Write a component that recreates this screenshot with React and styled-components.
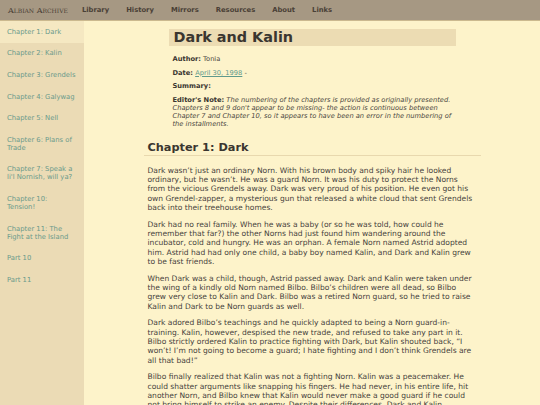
import React from 'react';
import styled, { createGlobalStyle } from 'styled-components';

const GlobalStyle = createGlobalStyle`
  html, body {
    margin: 0;
    padding: 0;
    background: #fdf3ca;
  }
  body {
    font-family: "DejaVu Sans", Verdana, sans-serif;
    color: #3d3a35;
  }
`;

const chapters = [
  'Chapter 1: Dark',
  'Chapter 2: Kalin',
  'Chapter 3: Grendels',
  'Chapter 4: Galywag',
  'Chapter 5: Nell',
  'Chapter 6: Plans of Trade',
  "Chapter 7: Speak a li'l Nornish, will ya?",
  'Chapter 10: Tension!',
  'Chapter 11: The Fight at the Island',
  'Part 10',
  'Part 11',
];

const navItems = ['Library', 'History', 'Mirrors', 'Resources', 'About', 'Links'];

const paragraphs = [
  "Dark wasn’t just an ordinary Norn. With his brown body and spiky hair he looked ordinary, but he wasn’t. He was a guard Norn. It was his duty to protect the Norns from the vicious Grendels away. Dark was very proud of his position. He even got his own Grendel-zapper, a mysterious gun that released a white cloud that sent Grendels back into their treehouse homes.",
  "Dark had no real family. When he was a baby (or so he was told, how could he remember that far?) the other Norns had just found him wandering around the incubator, cold and hungry. He was an orphan. A female Norn named Astrid adopted him. Astrid had had only one child, a baby boy named Kalin, and Dark and Kalin grew to be fast friends.",
  "When Dark was a child, though, Astrid passed away. Dark and Kalin were taken under the wing of a kindly old Norn named Bilbo. Bilbo’s children were all dead, so Bilbo grew very close to Kalin and Dark. Bilbo was a retired Norn guard, so he tried to raise Kalin and Dark to be Norn guards as well.",
  "Dark adored Bilbo’s teachings and he quickly adapted to being a Norn guard-in-training. Kalin, however, despised the new trade, and refused to take any part in it. Bilbo strictly ordered Kalin to practice fighting with Dark, but Kalin shouted back, “I won’t! I’m not going to become a guard; I hate fighting and I don’t think Grendels are all that bad!”",
  "Bilbo finally realized that Kalin was not a fighting Norn. Kalin was a peacemaker. He could shatter arguments like snapping his fingers. He had never, in his entire life, hit another Norn, and Bilbo knew that Kalin would never make a good guard if he could not bring himself to strike an enemy. Despite their differences, Dark and Kalin remained the best of friends.",
];

const Page = styled.div`
  min-height: 100vh;
  display: flex;
  flex-direction: column;
`;

const NavBar = styled.nav`
  height: 20px;
  display: flex;
  align-items: center;
  background: #a69883;
  border-bottom: 1px solid #cbb98f;
  padding-left: 8px;
`;

const SiteTitle = styled.span`
  font-family: "DejaVu Serif", "Liberation Serif", serif;
  font-variant: small-caps;
  font-size: 8px;
  color: #4a4036;
  margin-right: 14px;
`;

const NavLink = styled.a`
  font-size: 6.8px;
  font-weight: bold;
  color: #4a4036;
  text-decoration: none;
  margin-right: 17px;
`;

const Body = styled.div`
  flex: 1;
  display: flex;
`;

const Sidebar = styled.aside`
  width: 84px;
  flex-shrink: 0;
  background: #ebdbb5;
`;

const SideItem = styled.a`
  display: block;
  padding: 6.8px 7px;
  font-size: 6.8px;
  line-height: 8px;
  color: #6a9a8b;
  text-decoration: none;
  background: ${(p) => (p.$active ? '#f5e8c2' : 'transparent')};
`;

const Main = styled.main`
  flex: 1;
  display: flex;
  justify-content: center;
`;

const Content = styled.div`
  width: 337px;
`;

const Header = styled.header`
  width: 287px;
  margin: 8px auto 0;
`;

const Title = styled.h1`
  margin: 0;
  padding: 0 5px;
  height: 17px;
  line-height: 17px;
  background: #ecdcb3;
  font-size: 14.4px;
  color: #3a3630;
`;

const Meta = styled.p`
  margin: 9px 0 0 4px;
  font-size: 6.7px;
  line-height: 8px;
  color: #4a4640;
  & + & {
    margin-top: 5.6px;
  }
`;

const Label = styled.b`
  color: #3a3630;
`;

const Note = styled.i`
  color: #4a4640;
`;

const DateLink = styled.a`
  color: #5f9a8c;
  text-decoration: underline;
`;

const ChapterTitle = styled.h2`
  margin: 13px 0 0;
  padding: 0 4px;
  font-size: 11.3px;
  line-height: 14px;
  color: #3a3630;
  border-bottom: 1px solid #e8d8ae;
`;

const Paragraph = styled.p`
  margin: 7.3px 4px 0;
  font-size: 7.55px;
  line-height: 9.33px;
  color: #45413b;
  &:first-of-type {
    margin-top: 10px;
  }
`;

export default function App() {
  return (
    <Page>
      <GlobalStyle />
      <NavBar>
        <SiteTitle>Albian Archive</SiteTitle>
        {navItems.map((item) => (
          <NavLink key={item} href="#">{item}</NavLink>
        ))}
      </NavBar>
      <Body>
        <Sidebar>
          {chapters.map((ch, i) => (
            <SideItem key={ch} href="#" $active={i === 0}>{ch}</SideItem>
          ))}
        </Sidebar>
        <Main>
          <Content>
            <Header>
              <Title>Dark and Kalin</Title>
              <Meta><Label>Author:</Label> Tonia</Meta>
              <Meta><Label>Date:</Label> <DateLink href="#">April 30, 1998</DateLink> -</Meta>
              <Meta><Label>Summary:</Label></Meta>
              <Meta>
                <Label>Editor's Note:</Label>{' '}
                <Note>
                  The numbering of the chapters is provided as originally presented. Chapters 8 and 9 don't
                  appear to be missing- the action is continuous between Chapter 7 and Chapter 10, so it
                  appears to have been an error in the numbering of the installments.
                </Note>
              </Meta>
            </Header>
            <ChapterTitle>Chapter 1: Dark</ChapterTitle>
            {paragraphs.map((p, i) => (
              <Paragraph key={i}>{p}</Paragraph>
            ))}
          </Content>
        </Main>
      </Body>
    </Page>
  );
}
